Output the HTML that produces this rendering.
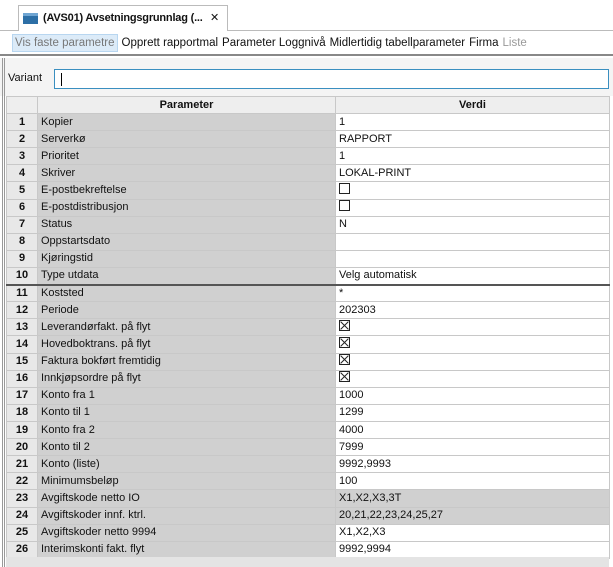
<!DOCTYPE html>
<html><head><style>
*{margin:0;padding:0;box-sizing:border-box}
body{width:613px;height:567px;background:#fff;font-family:"Liberation Sans",sans-serif;font-size:11px;color:#111;position:relative;overflow:hidden}
.tabbar{position:absolute;left:0;top:0;width:613px;height:31px;background:#fff;border-bottom:1px solid #bbb}
.tab{position:absolute;left:18px;top:5px;width:210px;height:26px;background:#fff;border:1px solid #bbb;border-bottom:none;font-weight:bold;font-size:11px;line-height:24px;padding-left:24px;white-space:nowrap;letter-spacing:-0.2px}
.ico{position:absolute;left:4px;top:7px;width:15px;height:11px;background:#2d6fa6;border-top:3px solid #6fa5d2}
.close{position:absolute;right:8px;top:0;font-weight:normal}
.tb{position:absolute;left:0;top:31px;width:613px;height:25px;background:#fff;border-bottom:2px solid #888;white-space:nowrap;font-size:11.5px;line-height:25px}
.tb span{margin-left:4px}
.tb .sel{background:#dcebf8;border:1px solid #b8d6f0;color:#777;padding:2px 2px;margin-left:12px}
.var{position:absolute;left:0;top:58px;width:613px;height:38px;background:#f4f4f4}
.var .l{position:absolute;left:8px;top:14px;font-size:11px}
.var .in{position:absolute;left:54px;top:11px;width:555px;height:20px;border:1px solid #3a8fc0;background:#fff}
.var .in i{position:absolute;left:6px;top:3px;width:1px;height:13px;background:#000}
.lb{position:absolute;left:2px;top:58px;width:3px;height:509px;border-left:1px solid #999;border-right:1px solid #999}
table{position:absolute;left:6px;top:96px;width:603px;border-collapse:collapse;table-layout:fixed}
td,th{border:1px solid #c8c8c8;height:17.12px;padding:0 3px;white-space:nowrap;overflow:hidden;line-height:15px}
th{background:#eee;font-weight:bold;height:17px}
td.n{background:#e8e8e8;text-align:center;font-weight:bold}
td.p{background:#d0d0d0}
td.v{background:#fff}
tr.g td.v{background:#d0d0d0}
tr.t td{border-top:2px solid #555}
.cb{display:inline-block;width:11px;height:11px;border:1px solid #222;vertical-align:-1px;position:relative}
.cb.k:before,.cb.k:after{content:"";position:absolute;left:4px;top:-1px;width:1px;height:11px;background:#222;transform:rotate(45deg)}
.cb.k:after{transform:rotate(-45deg)}
.foot{position:absolute;left:6px;top:557px;width:603px;height:10px;background:#e4e4e4}
</style></head><body>
<div class="tabbar"><div class="tab"><div class="ico"></div>(AVS01) Avsetningsgrunnlag (...<span class="close">✕</span></div></div>
<div class="tb"><span class="sel">Vis faste parametre</span><span>Opprett rapportmal</span><span>Parameter Loggnivå</span><span>Midlertidig tabellparameter</span><span>Firma</span><span style="color:#999">Liste</span></div>
<div class="var"><span class="l">Variant</span><div class="in"><i></i></div></div>
<div class="lb"></div>
<table>
<colgroup><col style="width:31px"><col style="width:298px"><col style="width:274px"></colgroup>
<tr><th></th><th>Parameter</th><th>Verdi</th></tr>
<tr><td class="n">1</td><td class="p">Kopier</td><td class="v">1</td></tr>
<tr><td class="n">2</td><td class="p">Serverkø</td><td class="v">RAPPORT</td></tr>
<tr><td class="n">3</td><td class="p">Prioritet</td><td class="v">1</td></tr>
<tr><td class="n">4</td><td class="p">Skriver</td><td class="v">LOKAL-PRINT</td></tr>
<tr><td class="n">5</td><td class="p">E-postbekreftelse</td><td class="v"><span class="cb"></span></td></tr>
<tr><td class="n">6</td><td class="p">E-postdistribusjon</td><td class="v"><span class="cb"></span></td></tr>
<tr><td class="n">7</td><td class="p">Status</td><td class="v">N</td></tr>
<tr><td class="n">8</td><td class="p">Oppstartsdato</td><td class="v"></td></tr>
<tr><td class="n">9</td><td class="p">Kjøringstid</td><td class="v"></td></tr>
<tr><td class="n">10</td><td class="p">Type utdata</td><td class="v">Velg automatisk</td></tr>
<tr class="t"><td class="n">11</td><td class="p">Koststed</td><td class="v">*</td></tr>
<tr><td class="n">12</td><td class="p">Periode</td><td class="v">202303</td></tr>
<tr><td class="n">13</td><td class="p">Leverandørfakt. på flyt</td><td class="v"><span class="cb k"></span></td></tr>
<tr><td class="n">14</td><td class="p">Hovedboktrans. på flyt</td><td class="v"><span class="cb k"></span></td></tr>
<tr><td class="n">15</td><td class="p">Faktura bokført fremtidig</td><td class="v"><span class="cb k"></span></td></tr>
<tr><td class="n">16</td><td class="p">Innkjøpsordre på flyt</td><td class="v"><span class="cb k"></span></td></tr>
<tr><td class="n">17</td><td class="p">Konto fra 1</td><td class="v">1000</td></tr>
<tr><td class="n">18</td><td class="p">Konto til 1</td><td class="v">1299</td></tr>
<tr><td class="n">19</td><td class="p">Konto fra 2</td><td class="v">4000</td></tr>
<tr><td class="n">20</td><td class="p">Konto til 2</td><td class="v">7999</td></tr>
<tr><td class="n">21</td><td class="p">Konto (liste)</td><td class="v">9992,9993</td></tr>
<tr><td class="n">22</td><td class="p">Minimumsbeløp</td><td class="v">100</td></tr>
<tr class="g"><td class="n">23</td><td class="p">Avgiftskode netto IO</td><td class="v">X1,X2,X3,3T</td></tr>
<tr class="g"><td class="n">24</td><td class="p">Avgiftskoder innf. ktrl.</td><td class="v">20,21,22,23,24,25,27</td></tr>
<tr><td class="n">25</td><td class="p">Avgiftskoder netto 9994</td><td class="v">X1,X2,X3</td></tr>
<tr><td class="n">26</td><td class="p">Interimskonti fakt. flyt</td><td class="v">9992,9994</td></tr>
</table>
<div class="foot"></div>
</body></html>
